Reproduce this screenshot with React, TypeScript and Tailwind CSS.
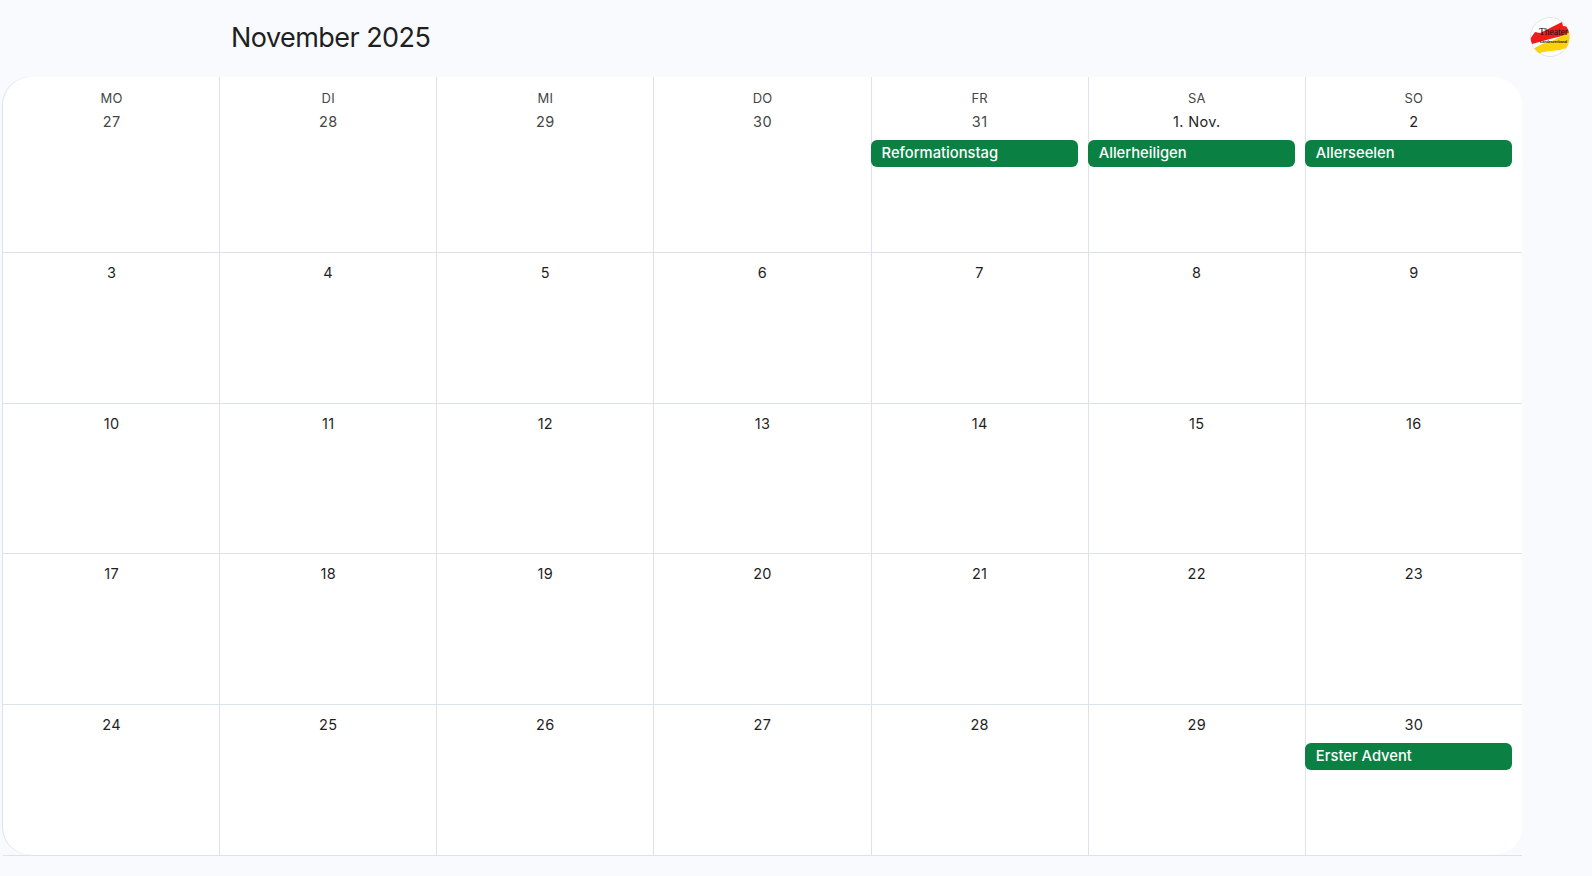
const headers = ['MO', 'DI', 'MI', 'DO', 'FR', 'SA', 'SO']

const days: { label: string; event?: string; muted?: boolean }[] = [
  { label: '27', muted: true },
  { label: '28', muted: true },
  { label: '29', muted: true },
  { label: '30', muted: true },
  { label: '31', muted: true, event: 'Reformationstag' },
  { label: '1. Nov.', event: 'Allerheiligen' },
  { label: '2', event: 'Allerseelen' },
  ...Array.from({ length: 27 }, (_, i) => ({ label: String(i + 3) })),
  { label: '30', event: 'Erster Advent' },
]

function Logo() {
  return (
    <svg width="40" height="40" viewBox="0 0 40 40" className="rounded-full">
      <defs>
        <clipPath id="logo-clip">
          <circle cx="20" cy="20" r="19.5" />
        </clipPath>
      </defs>
      <circle cx="20" cy="20" r="19.5" fill="#fff" stroke="#e0e0e0" />
      <g clipPath="url(#logo-clip)">
        <path d="M0 22 L5 15 L10 16 L32 5 L33 9 L40 10 L40 17 L20 22 L2 27 Z" fill="#ee1c1c" />
        <path d="M3 32 L12 27 L22 24 L40 15 L40 30 L30 33 L13 35 L8 37 Z" fill="#fdd20a" />
      </g>
      <text x="9" y="18" fontSize="10.5" textLength="29" lengthAdjust="spacingAndGlyphs" fontFamily="'Liberation Serif', serif" fill="#111">Theater</text>
      <text x="10" y="26" fontSize="4" textLength="27" lengthAdjust="spacingAndGlyphs" fontWeight="700" fontFamily="'Liberation Sans', sans-serif" fill="#111">Landesverband</text>
    </svg>
  )
}

export default function App() {
  return (
    <div className="h-[876px] w-[1592px] overflow-hidden bg-[#f8fafd] font-['Inter',sans-serif] text-[#1f1f1f]">
      <header className="flex h-[77px] items-start pr-[22px]">
        <h1 className="ml-[231px] mt-[19px] text-[27px] leading-[38px] tracking-[-0.55px]">November 2025</h1>
        <div className="ml-auto mt-[17px]">
          <Logo />
        </div>
      </header>
      <div className="ml-[3px] w-[1519px] border-b border-[#dde3ea]">
        <div className="-ml-px grid h-[778px] w-[1520px] grid-cols-7 grid-rows-[176px_151px_150px_151px_150px] rounded-[28px] bg-white shadow-[inset_1px_0_0_#dde3ea]">
          {days.map((d, i) => (
            <div
              key={i}
              className={`flex flex-col ${i % 7 === 0 ? 'pl-[2px]' : 'border-l border-[#dde3ea]'} ${i < 28 ? 'border-b border-[#dde3ea]' : ''}`}
            >
              {i < 7 && (
                <div className="mt-[13px] h-[16px] text-center text-[13px] font-normal leading-[16px] tracking-[0.2px] text-[#444746]">
                  {headers[i]}
                </div>
              )}
              <div
                className={`text-center text-[14.5px] font-normal leading-[20px] tracking-[0.35px] ${i < 7 ? 'mt-[6px]' : 'mt-[10px]'} ${d.muted ? 'text-[#444746]' : 'text-[#1f1f1f]'}`}
              >
                {d.label}
              </div>
              {d.event && (
                <div className="-ml-px mr-[10px] mt-[8px] h-[27px] rounded-[6px] bg-[#0b8043] pl-[11px] text-[14.75px] font-medium leading-[26px] text-white">
                  {d.event}
                </div>
              )}
            </div>
          ))}
        </div>
      </div>
    </div>
  )
}
